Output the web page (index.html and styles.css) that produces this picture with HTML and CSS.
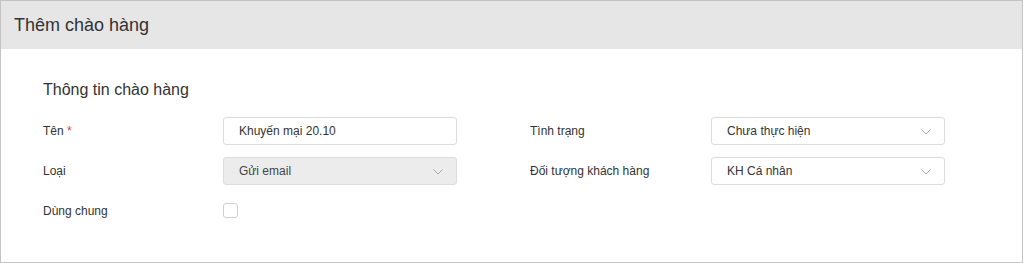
FILE: index.html
```html
<!DOCTYPE html>
<html lang="vi">
<head>
    <meta charset="UTF-8">
    <title>Thêm chào hàng</title>
    <link rel="stylesheet" href="styles.css">
</head>
<body>
    <div class="panel">
        <div class="panel-header">Thêm chào hàng</div>
        <div class="panel-body">
            <h2 class="section-title">Thông tin chào hàng</h2>
            <div class="form-grid">
                <label class="field-label">Tên <span class="required">*</span></label>
                <div class="input">Khuyến mại 20.10</div>
                <label class="field-label">Tình trạng</label>
                <div class="select">
                    <span>Chưa thực hiện</span>
                    <svg class="chevron" viewBox="0 0 10 6"><polyline points="0.5 0.5 5 5 9.5 0.5"></polyline></svg>
                </div>

                <label class="field-label">Loại</label>
                <div class="select disabled">
                    <span>Gửi email</span>
                    <svg class="chevron" viewBox="0 0 10 6"><polyline points="0.5 0.5 5 5 9.5 0.5"></polyline></svg>
                </div>
                <label class="field-label">Đối tượng khách hàng</label>
                <div class="select">
                    <span>KH Cá nhân</span>
                    <svg class="chevron" viewBox="0 0 10 6"><polyline points="0.5 0.5 5 5 9.5 0.5"></polyline></svg>
                </div>

                <label class="field-label">Dùng chung</label>
                <div class="check-cell"><span class="checkbox"></span></div>
            </div>
        </div>
    </div>
</body>
</html>
```

FILE: styles.css
```css
* {
    margin: 0;
    padding: 0;
    box-sizing: border-box;
    font-family: "Liberation Sans", Arial, sans-serif;
}

body {
    background: #fff;
    color: #333;
}

.panel {
    width: 1023px;
    height: 263px;
    border: 1px solid #c4c4c4;
    background: #fff;
}

.panel-header {
    height: 48px;
    background: #e6e6e6;
    padding-left: 13px;
    display: flex;
    align-items: center;
    font-size: 18px;
    color: #333;
}

.panel-body {
    padding: 31px 42px 0;
}

.section-title {
    font-size: 16px;
    font-weight: normal;
    line-height: 20px;
    color: #333;
    margin-bottom: 17px;
}

.form-grid {
    display: grid;
    grid-template-columns: 180px 234px 73px 181px 234px;
    grid-auto-rows: 28px;
    row-gap: 12px;
    align-items: center;
}

.form-grid > :nth-child(3),
.form-grid > :nth-child(7) {
    grid-column: 4;
}

.field-label {
    font-size: 12px;
    color: #333;
}

.required {
    color: #e53935;
}

.input,
.select {
    height: 28px;
    border: 1px solid #dcdcdc;
    border-radius: 3px;
    padding: 0 15px;
    font-size: 12px;
    color: #333;
    display: flex;
    align-items: center;
}

.select {
    justify-content: space-between;
}

.select.disabled {
    background: #ececec;
    color: #444;
}

.chevron {
    width: 10px;
    height: 6px;
    fill: none;
    stroke: #aaa;
    stroke-width: 1;
    margin-right: -2px;
    margin-top: 2px;
}

.checkbox {
    display: block;
    width: 15px;
    height: 15px;
    border: 1px solid #cfcfcf;
    border-radius: 3px;
    margin-top: -1px;
}
```
